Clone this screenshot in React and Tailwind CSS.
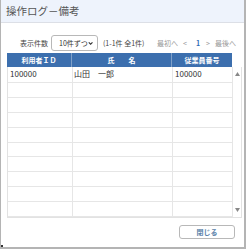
export default function App() {
  const jp = { fontFamily: '"Noto Sans CJK JP", "Noto Sans", sans-serif' };
  const rows = Array.from({ length: 10 });
  return (
    <div style={jp} className="w-[246px] h-[250px] bg-white">
      <div className="w-[246px] h-[249px] border-l border-r-2 border-b-2 border-[#b4b4b4] flex flex-col relative">
        <div className="h-[23px] bg-[#eef3fc] border-b border-[#dcdfe6] flex items-center pl-[5px] text-[10.5px] text-[#555]">
          操作ログ－備考
        </div>
        <div className="h-[16px] mt-[12px] flex items-center text-[7px] text-[#444] whitespace-nowrap">
          <span className="ml-[19px] w-[28px] shrink-0">表示件数</span>
          <div className="ml-[3px] shrink-0 w-[47px] h-[16px] border border-[#b8b8b8] rounded-[3px] flex items-center justify-between pl-[7px] pr-[4px] text-[7px] text-[#333]">
            <span>10件ずつ</span>
            <svg width="6" height="5" viewBox="0 0 7 5"><path d="M1 1l2.5 2.5L6 1" stroke="#333" strokeWidth="1.5" fill="none" /></svg>
          </div>
          <span className="ml-[5px] w-[54px] shrink-0">(1-1件 全1件)</span>
          <span className="w-[22px] shrink-0 text-[#999]">最初へ</span>
          <span className="ml-[4px] text-[#999]">&lt;</span>
          <span className="ml-[9px] text-[#2f6db5] font-bold">1</span>
          <span className="ml-[6px] text-[#999]">&gt;</span>
          <span className="ml-[5px] text-[#999]">最後へ</span>
        </div>
        <div className="ml-[6px] mt-[2px] w-[225px] h-[14px] bg-[#3c6fae] flex text-[7px] font-bold text-white">
          <div className="w-[65px] border-r border-[#7fa0c8] flex items-center justify-center">利用者ＩＤ</div>
          <div className="w-[100px] border-r border-[#7fa0c8] flex items-center justify-center">氏　　名</div>
          <div className="flex-1 flex items-center justify-center">従業員番号</div>
        </div>
        <div className="ml-[6px] w-[235px] h-[151px] border-l border-r border-b border-[#e2e2e2] flex">
          <div className="w-[225px] flex flex-col">
            {rows.map((_, i) => (
              <div key={i} className={`${i === 0 ? 'h-[16px]' : 'h-[15px]'} border-b border-[#e6e6e6] flex text-[8px] text-[#333]`}>
                <div className="w-[65px] border-r border-[#e6e6e6] flex items-center pl-[2px]">{i === 0 ? '100000' : ''}</div>
                <div className="w-[100px] border-r border-[#e6e6e6] flex items-center pl-[1px]">{i === 0 ? '山田　一郎' : ''}</div>
                <div className="flex-1 border-r border-[#e6e6e6] flex items-center pl-[2px]">{i === 0 ? '100000' : ''}</div>
              </div>
            ))}
          </div>
          <div className="flex-1 flex flex-col justify-between items-center py-[5px]">
            <svg width="5" height="4" viewBox="0 0 5 4"><path d="M0 4L2.5 0L5 4z" fill="#888" /></svg>
            <svg width="5" height="4" viewBox="0 0 5 4"><path d="M0 0L2.5 4L5 0z" fill="#888" /></svg>
          </div>
        </div>
        <div className="flex justify-end mt-[7px] pr-[9px]">
          <div className="w-[56px] h-[14px] border border-[#b8b8b8] rounded-[3px] flex items-center justify-center text-[7px] font-bold text-[#5a7fa8]">
            閉じる
          </div>
        </div>
        <div className="absolute left-[0px] bottom-[0px] w-[2px] h-[2px] bg-[#333]" />
      </div>
    </div>
  );
}
